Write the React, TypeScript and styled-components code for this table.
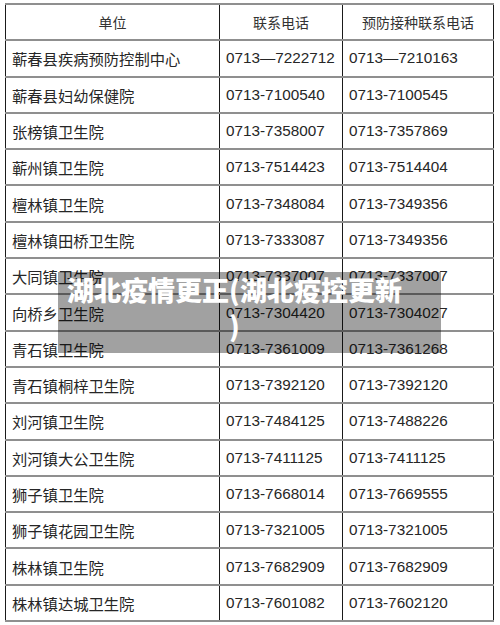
import React from "react";
import styled, { createGlobalStyle } from "styled-components";

const rows: [string, string, string][] = [
    ["蕲春县疾病预防控制中心", "0713—7222712", "0713—7210163"],
    ["蕲春县妇幼保健院", "0713-7100540", "0713-7100545"],
    ["张榜镇卫生院", "0713-7358007", "0713-7357869"],
    ["蕲州镇卫生院", "0713-7514423", "0713-7514404"],
    ["檀林镇卫生院", "0713-7348084", "0713-7349356"],
    ["檀林镇田桥卫生院", "0713-7333087", "0713-7349356"],
    ["大同镇卫生院", "0713-7337007", "0713-7337007"],
    ["向桥乡卫生院", "0713-7304420", "0713-7304027"],
    ["青石镇卫生院", "0713-7361009", "0713-7361268"],
    ["青石镇桐梓卫生院", "0713-7392120", "0713-7392120"],
    ["刘河镇卫生院", "0713-7484125", "0713-7488226"],
    ["刘河镇大公卫生院", "0713-7411125", "0713-7411125"],
    ["狮子镇卫生院", "0713-7668014", "0713-7669555"],
    ["狮子镇花园卫生院", "0713-7321005", "0713-7321005"],
    ["株林镇卫生院", "0713-7682909", "0713-7682909"],
    ["株林镇达城卫生院", "0713-7601082", "0713-7602120"],
];

export default () => {
    return (<>
        <GlobalStyle />
        <StyledPage>
            <StyledTable>
                <colgroup>
                    <col style={{ width: 214 }} />
                    <col style={{ width: 123 }} />
                    <col style={{ width: 151 }} />
                </colgroup>
                <thead>
                    <tr>
                        <HeadCell>单位</HeadCell>
                        <HeadCell>联系电话</HeadCell>
                        <HeadCell>预防接种联系电话</HeadCell>
                    </tr>
                </thead>
                <tbody>
                    {rows.map(([name, tel, vac]) => (
                        <tr key={name + tel}>
                            <Cell>{name}</Cell>
                            <Cell>{tel}</Cell>
                            <Cell>{vac}</Cell>
                        </tr>
                    ))}
                </tbody>
            </StyledTable>
            <Caption>湖北疫情更正(湖北疫控更新)</Caption>
        </StyledPage>
    </>)
}

const GlobalStyle = createGlobalStyle`
    body {
        margin: 0;
        background: #fff;
        font-family: "Liberation Sans", "Noto Sans CJK SC", sans-serif;
    }
`

const StyledPage = styled.div`
    position: relative;
    width: 500px;
    height: 625px;
    padding: 3px 0 0 5px;
    box-sizing: border-box;
    overflow: hidden;
`

const StyledTable = styled.table`
    border-collapse: collapse;
    table-layout: fixed;
    width: 489px;
    border-left: 1px solid #1a1a1a;
    border-top: 2px solid #8f8f8f;
    tr {
        height: 36.3px;
    }
`

const HeadCell = styled.th`
    font-weight: normal;
    font-size: 14px;
    color: #333;
    text-align: center;
    vertical-align: middle;
    padding: 0 6px;
    border-right: 1px solid #1a1a1a;
    border-bottom: 2px solid #8f8f8f;
    white-space: nowrap;
`

const Cell = styled.td`
    font-size: 15.3px;
    color: #262626;
    text-align: left;
    vertical-align: middle;
    padding: 0 6px;
    border-right: 1px solid #1a1a1a;
    border-bottom: 2px solid #8f8f8f;
    white-space: nowrap;
`

const Caption = styled.div`
    position: absolute;
    left: 58px;
    top: 272px;
    width: 383px;
    height: 81px;
    box-sizing: border-box;
    padding: 0 38px 0 8px;
    background: rgba(0, 0, 0, 0.37);
    color: #fff;
    font-family: "Noto Sans CJK SC", sans-serif;
    font-weight: 900;
    font-size: 27px;
    line-height: 36px;
    text-align: center;
    line-break: anywhere;
`
